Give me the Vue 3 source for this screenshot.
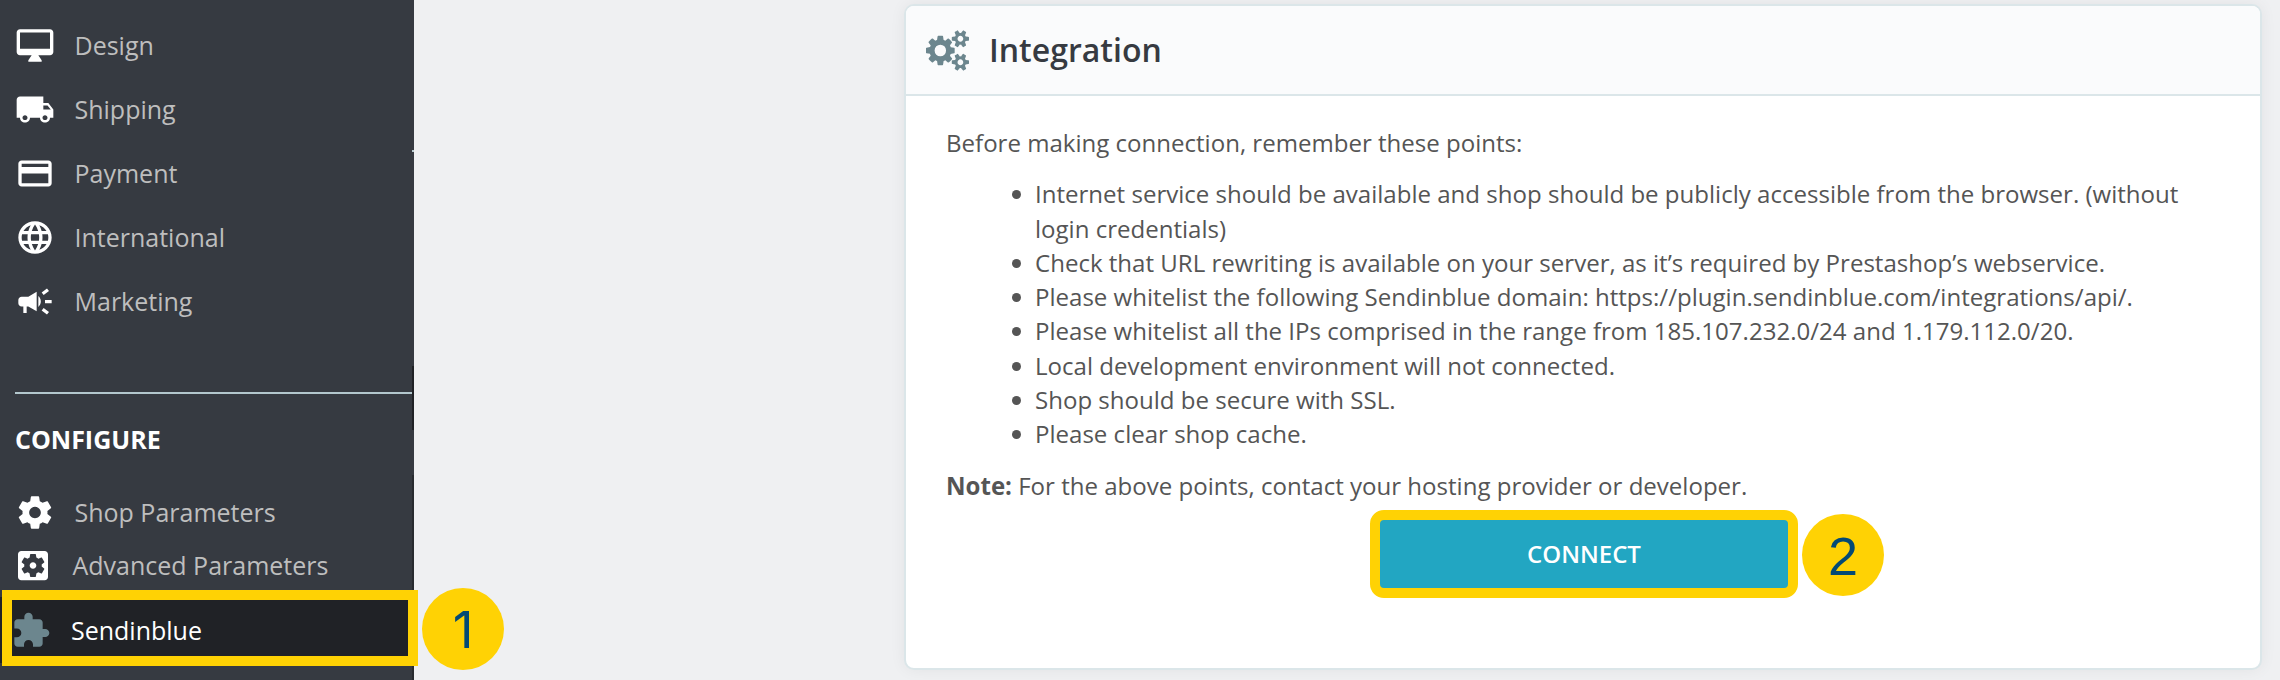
<template>
  <div class="page">
    <aside class="sidebar">
      <nav class="menu">
        <a v-for="item in mainMenu" :key="item.label" class="menu-item">
          <svg class="menu-icon" viewBox="0 0 24 24" preserveAspectRatio="none">
            <path :d="item.icon" />
          </svg>
          <span class="menu-label">{{ item.label }}</span>
        </a>
      </nav>
      <hr class="divider" />
      <h2 class="menu-title">CONFIGURE</h2>
      <nav class="menu configure">
        <a
          v-for="item in configureMenu"
          :key="item.label"
          class="menu-item"
          :class="item.type"
        >
          <svg class="menu-icon" viewBox="0 0 24 24" preserveAspectRatio="none">
            <path :d="item.icon" />
          </svg>
          <span class="menu-label">{{ item.label }}</span>
        </a>
      </nav>
      <i class="edge tick"></i>
      <i class="edge upper"></i>
      <i class="edge lower"></i>
      <div class="highlight"></div>
      <span class="step step-one">1</span>
    </aside>

    <main class="content">
      <section class="card">
        <header class="card-header">
          <svg class="cogs" viewBox="0 0 1920 1792" preserveAspectRatio="none">
            <path :d="cogs" />
          </svg>
          <h1>Integration</h1>
        </header>
        <div class="card-body">
          <p class="intro">Before making connection, remember these points:</p>
          <ul class="points">
            <li v-for="point in points" :key="point">{{ point }}</li>
          </ul>
          <p class="note">
            <strong>Note:</strong> For the above points, contact your hosting provider or developer.
          </p>
          <div class="action">
            <button type="button" class="connect-button">CONNECT</button>
            <span class="step step-two">2</span>
          </div>
        </div>
      </section>
    </main>
  </div>
</template>

<script setup>
const mainMenu = [
  {
    label: 'Design',
    icon: 'M21 2H3c-1.1 0-2 .9-2 2v12c0 1.1.9 2 2 2h7l-2 3v1h8v-1l-2-3h7c1.1 0 2-.9 2-2V4c0-1.1-.9-2-2-2zm0 12H3V4h18v10z'
  },
  {
    label: 'Shipping',
    icon: 'M20 8h-3V4H3c-1.1 0-2 .9-2 2v11h2c0 1.66 1.34 3 3 3s3-1.34 3-3h6c0 1.66 1.34 3 3 3s3-1.34 3-3h2v-5l-3-4zM6 18.5c-.83 0-1.5-.67-1.5-1.5s.67-1.5 1.5-1.5 1.5.67 1.5 1.5-.67 1.5-1.5 1.5zm13.5-9l1.96 2.5H17V9.5h2.5zm-1.5 9c-.83 0-1.5-.67-1.5-1.5s.67-1.5 1.5-1.5 1.5.67 1.5 1.5-.67 1.5-1.5 1.5z'
  },
  {
    label: 'Payment',
    icon: 'M20 4H4c-1.11 0-1.99.89-1.99 2L2 18c0 1.11.89 2 2 2h16c1.11 0 2-.89 2-2V6c0-1.11-.89-2-2-2zm0 14H4v-6h16v6zm0-10H4V6h16v2z'
  },
  {
    label: 'International',
    icon: 'M11.99 2C6.47 2 2 6.48 2 12s4.47 10 9.99 10C17.52 22 22 17.52 22 12S17.52 2 11.99 2zm6.93 6h-2.95c-.32-1.25-.78-2.45-1.38-3.56 1.84.63 3.37 1.91 4.33 3.56zM12 4.04c.83 1.2 1.48 2.53 1.91 3.96h-3.82c.43-1.43 1.08-2.76 1.91-3.96zM4.26 14C4.1 13.36 4 12.69 4 12s.1-1.36.26-2h3.38c-.08.66-.14 1.32-.14 2 0 .68.06 1.34.14 2H4.26zm.82 2h2.95c.32 1.25.78 2.45 1.38 3.56-1.84-.63-3.37-1.9-4.33-3.56zm2.95-8H5.08c.96-1.66 2.49-2.93 4.33-3.56C8.81 5.55 8.35 6.75 8.03 8zM12 19.96c-.83-1.2-1.48-2.53-1.91-3.96h3.82c-.43 1.43-1.08 2.76-1.91 3.96zM14.34 14H9.66c-.09-.66-.16-1.32-.16-2 0-.68.07-1.35.16-2h4.68c.09.65.16 1.32.16 2 0 .68-.07 1.34-.16 2zm.25 5.56c.6-1.11 1.06-2.31 1.38-3.56h2.95c-.96 1.65-2.49 2.93-4.33 3.56zM16.36 14c.08-.66.14-1.32.14-2 0-.68-.06-1.34-.14-2h3.38c.16.64.26 1.31.26 2s-.1 1.36-.26 2h-3.38z'
  },
  {
    label: 'Marketing',
    icon: 'M18 11v2h4v-2h-4zm-2 6.61c.96.71 2.21 1.65 3.2 2.39.4-.53.8-1.07 1.2-1.6-.99-.74-2.24-1.68-3.2-2.4-.4.54-.8 1.08-1.2 1.61zM20.4 5.6c-.4-.53-.8-1.07-1.2-1.6-.99.74-2.24 1.68-3.2 2.4.4.53.8 1.07 1.2 1.6.96-.72 2.21-1.65 3.2-2.4zM4 9c-1.1 0-2 .9-2 2v2c0 1.1.9 2 2 2h1v4h2v-4h1l5 3V6L8 9H4zm11.5 3c0-1.33-.58-2.53-1.5-3.35v6.69c.92-.81 1.5-2.01 1.5-3.34z'
  }
]

const configureMenu = [
  {
    label: 'Shop Parameters',
    type: 'shop',
    icon: 'M19.43 12.98c.04-.32.07-.64.07-.98s-.03-.66-.07-.98l2.11-1.65c.19-.15.24-.42.12-.64l-2-3.46c-.12-.22-.39-.3-.61-.22l-2.49 1c-.52-.4-1.08-.73-1.69-.98l-.38-2.65C14.46 2.18 14.25 2 14 2h-4c-.25 0-.46.18-.49.42l-.38 2.65c-.61.25-1.17.59-1.69.98l-2.49-1c-.23-.09-.49 0-.61.22l-2 3.46c-.13.22-.07.49.12.64l2.11 1.65c-.04.32-.07.65-.07.98s.03.66.07.98l-2.11 1.65c-.19.15-.24.42-.12.64l2 3.46c.12.22.39.3.61.22l2.49-1c.52.4 1.08.73 1.69.98l.38 2.65c.03.24.24.42.49.42h4c.25 0 .46-.18.49-.42l.38-2.65c.61-.25 1.17-.59 1.69-.98l2.49 1c.23.09.49 0 .61-.22l2-3.46c.12-.22.07-.49-.12-.64l-2.11-1.65zM12 15.5c-1.93 0-3.5-1.57-3.5-3.5s1.57-3.5 3.5-3.5 3.5 1.57 3.5 3.5-1.57 3.5-3.5 3.5z'
  },
  {
    label: 'Advanced Parameters',
    type: 'advanced',
    icon: 'M12 10c-1.1 0-2 .9-2 2s.9 2 2 2 2-.9 2-2-.9-2-2-2zm7-7H5c-1.11 0-2 .9-2 2v14c0 1.1.89 2 2 2h14c1.11 0 2-.9 2-2V5c0-1.1-.89-2-2-2zm-1.75 9c0 .23-.02.46-.05.68l1.48 1.16c.13.11.17.3.08.45l-1.4 2.42c-.09.15-.27.21-.43.15l-1.74-.7c-.36.28-.76.51-1.18.69l-.26 1.85c-.03.17-.18.3-.35.3h-2.8c-.17 0-.32-.13-.35-.29l-.26-1.85c-.43-.18-.82-.41-1.18-.69l-1.74.7c-.16.06-.34 0-.43-.15l-1.4-2.42c-.09-.15-.05-.34.08-.45l1.48-1.16c-.03-.23-.05-.46-.05-.69 0-.23.02-.46.05-.68l-1.48-1.16c-.13-.11-.17-.3-.08-.45l1.4-2.42c.09-.15.27-.21.43-.15l1.74.7c.36-.28.76-.51 1.18-.69l.26-1.85c.03-.17.18-.3.35-.3h2.8c.17 0 .32.13.35.29l.26 1.85c.43.18.82.41 1.18.69l1.74-.7c.16-.06.34 0 .43.15l1.4 2.42c.09.15.05.34-.08.45l-1.48 1.16c.03.23.05.46.05.69z'
  },
  {
    label: 'Sendinblue',
    type: 'active',
    icon: 'M20.5 11H19V7c0-1.1-.9-2-2-2h-4V3.5C13 2.12 11.88 1 10.5 1S8 2.12 8 3.5V5H4c-1.1 0-1.99.9-1.99 2v3.8H3.5c1.49 0 2.7 1.21 2.7 2.7s-1.21 2.7-2.7 2.7H2V20c0 1.1.9 2 2 2h3.8v-1.5c0-1.49 1.21-2.7 2.7-2.7 1.49 0 2.7 1.21 2.7 2.7V22H17c1.1 0 2-.9 2-2v-4h1.5c1.38 0 2.5-1.12 2.5-2.5S21.88 11 20.5 11z'
  }
]

const cogs = 'M896 896q0-106-75-181t-181-75-181 75-75 181 75 181 181 75 181-75 75-181zm768 512q0-52-38-90t-90-38-90 38-38 90q0 53 37.5 90.5t90.5 37.5 90.5-37.5 37.5-90.5zm0-1024q0-52-38-90t-90-38-90 38-38 90q0 53 37.5 90.5t90.5 37.5 90.5-37.5 37.5-90.5zm-384 421v185q0 10-7 19.5t-16 10.5l-155 24q-11 35-32 76 34 48 90 115 7 11 7 20 0 12-7 19-23 30-82.5 89.5t-78.5 59.5q-11 0-21-7l-115-90q-37 19-77 31-11 108-23 155-7 24-30 24h-186q-11 0-20-7.5t-10-17.5l-23-153q-34-10-75-31l-118 89q-7 7-20 7-11 0-21-8-144-133-144-160 0-9 7-19 10-14 41-53t47-61q-23-44-35-82l-152-24q-10-1-17-9.5t-7-19.5v-185q0-10 7-19.5t16-10.5l155-24q11-35 32-76-34-48-90-115-7-11-7-20 0-12 7-20 22-30 82-89t79-59q11 0 21 7l115 90q34-18 77-32 11-108 23-154 7-24 30-24h186q11 0 20 7.5t10 17.5l23 153q34 10 75 31l118-89q8-7 20-7 11 0 21 8 144 133 144 160 0 8-7 19-12 16-42 54t-45 60q23 48 34 82l152 23q10 2 17 10.5t7 19.5zm640 533v140q0 16-149 31-12 27-30 52 51 113 51 138 0 4-4 7-122 71-124 71-8 0-46-47t-52-68q-20 2-30 2t-30-2q-14 21-52 68t-46 47q-2 0-124-71-4-3-4-7 0-25 51-138-18-25-30-52-149-15-149-31v-140q0-16 149-31 13-29 30-52-51-113-51-138 0-4 4-7 4-2 35-20t59-34 30-16q8 0 46 46.5t52 67.5q20-2 30-2t30 2q51-71 92-112l6-2q4 0 124 70 4 3 4 7 0 25-51 138 17 23 30 52 149 15 149 31zm0-1024v140q0 16-149 31-12 27-30 52 51 113 51 138 0 4-4 7-122 71-124 71-8 0-46-47t-52-68q-20 2-30 2t-30-2q-14 21-52 68t-46 47q-2 0-124-71-4-3-4-7 0-25 51-138-18-25-30-52-149-15-149-31v-140q0-16 149-31 13-29 30-52-51-113-51-138 0-4 4-7 4-2 35-20t59-34 30-16q8 0 46 46.5t52 67.5q20-2 30-2t30 2q51-71 92-112l6-2q4 0 124 70 4 3 4 7 0 25-51 138 17 23 30 52 149 15 149 31z'

const points = [
  'Internet service should be available and shop should be publicly accessible from the browser. (without login credentials)',
  'Check that URL rewriting is available on your server, as it’s required by Prestashop’s webservice.',
  'Please whitelist the following Sendinblue domain: https://plugin.sendinblue.com/integrations/api/.',
  'Please whitelist all the IPs comprised in the range from 185.107.232.0/24 and 1.179.112.0/20.',
  'Local development environment will not connected.',
  'Shop should be secure with SSL.',
  'Please clear shop cache.'
]
</script>

<style>
body {
  margin: 0;
  overflow: hidden;
}
</style>

<style scoped>
.page {
  display: flex;
  width: 2280px;
  height: 680px;
  box-sizing: border-box;
  background: #eff0f2;
  font-family: "Open Sans", "Noto Sans", sans-serif;
  font-size: 25px;
}

.sidebar {
  position: relative;
  flex: none;
  width: 414px;
  height: 680px;
  box-sizing: border-box;
  padding-top: 13px;
  background: #363a41;
}

.menu {
  display: flex;
  flex-direction: column;
}

.menu-item {
  display: flex;
  align-items: center;
  height: 64px;
  padding-left: 14.5px;
  box-sizing: border-box;
  color: #bebebe;
}

.menu-icon {
  flex: none;
  width: 40px;
  height: 39px;
  fill: #fff;
}

.menu-label {
  margin-left: 20px;
  padding-bottom: 1px;
  line-height: 34px;
  white-space: nowrap;
}

.divider {
  height: 2px;
  margin: 59px 2px 0 15px;
  border: none;
  background: #b3c7cd;
}

.menu-title {
  margin: 28px 0 0 15px;
  color: #fff;
  font-size: 25px;
  font-weight: 700;
  line-height: 34px;
}

.configure {
  margin-top: 24px;
}

.menu-item.advanced {
  height: 42px;
  padding-left: 12.5px;
}

.menu-item.active {
  height: 66px;
  margin-top: 11px;
  padding-left: 11px;
  background: #202226;
  color: #fff;
}

.menu-item.active .menu-icon {
  fill: #6c868e;
}

/* seams along the sidebar's right edge */
.edge {
  position: absolute;
  right: 0;
  width: 2px;
}

.edge.tick {
  top: 150px;
  height: 2px;
  background: #bbcdd2;
}

.edge.upper {
  top: 366px;
  height: 64px;
  background: #202226;
}

.edge.lower {
  top: 475px;
  height: 205px;
  background: #282b30;
}

.highlight {
  position: absolute;
  left: 2px;
  top: 590px;
  width: 416px;
  height: 76px;
  box-sizing: border-box;
  border: 10px solid #ffd204;
}

.step {
  position: absolute;
  width: 82px;
  height: 82px;
  border-radius: 50%;
  background: #ffd204;
  color: #044a75;
  font-family: "Liberation Sans", Arial, sans-serif;
  font-size: 54px;
  line-height: 84px;
  text-align: center;
}

.step-one {
  left: 422px;
  top: 588px;
  font-family: Inter, sans-serif;
  font-size: 51px;
}

.content {
  flex: 1;
  padding: 4px 18px 0 490px;
}

.card {
  display: flex;
  flex-direction: column;
  height: 666px;
  box-sizing: border-box;
  border: 2px solid #dbe6e9;
  border-radius: 10px;
  background: #fff;
  box-shadow: 0 0 16px rgba(0, 0, 0, 0.06);
}

.card-header {
  display: flex;
  align-items: center;
  height: 90px;
  box-sizing: border-box;
  padding-left: 20px;
  border-bottom: 2px solid #dbe6e9;
  border-radius: 8px 8px 0 0;
  background: #fafbfc;
}

.cogs {
  width: 43px;
  height: 41px;
  fill: #6c868e;
}

.card-header h1 {
  margin: 0 0 0 20px;
  color: #363a41;
  font-size: 32px;
  font-weight: 600;
  line-height: 44px;
}

.card-body {
  padding: 30px 54px 0 40px;
  color: #555;
  font-size: 24.05px;
  line-height: 34.3px;
}

.intro,
.note {
  margin: 0;
}

.points {
  margin: 17px 0;
  padding-left: 89px;
  list-style: none;
}

.points li {
  position: relative;
}

.points li::before {
  content: "";
  position: absolute;
  left: -23px;
  top: 13px;
  width: 9px;
  height: 9px;
  border-radius: 50%;
  background: #555;
}

.action {
  position: relative;
  width: 428px;
  margin: 7px 0 0 424px;
}

.connect-button {
  display: block;
  width: 428px;
  height: 88px;
  padding: 0;
  border: 10px solid #ffd204;
  border-radius: 14px;
  background: #22a6c2;
  color: #fff;
  font-family: inherit;
  font-size: 24px;
  font-weight: 600;
}

.step-two {
  left: 432px;
  top: 4px;
}
</style>
